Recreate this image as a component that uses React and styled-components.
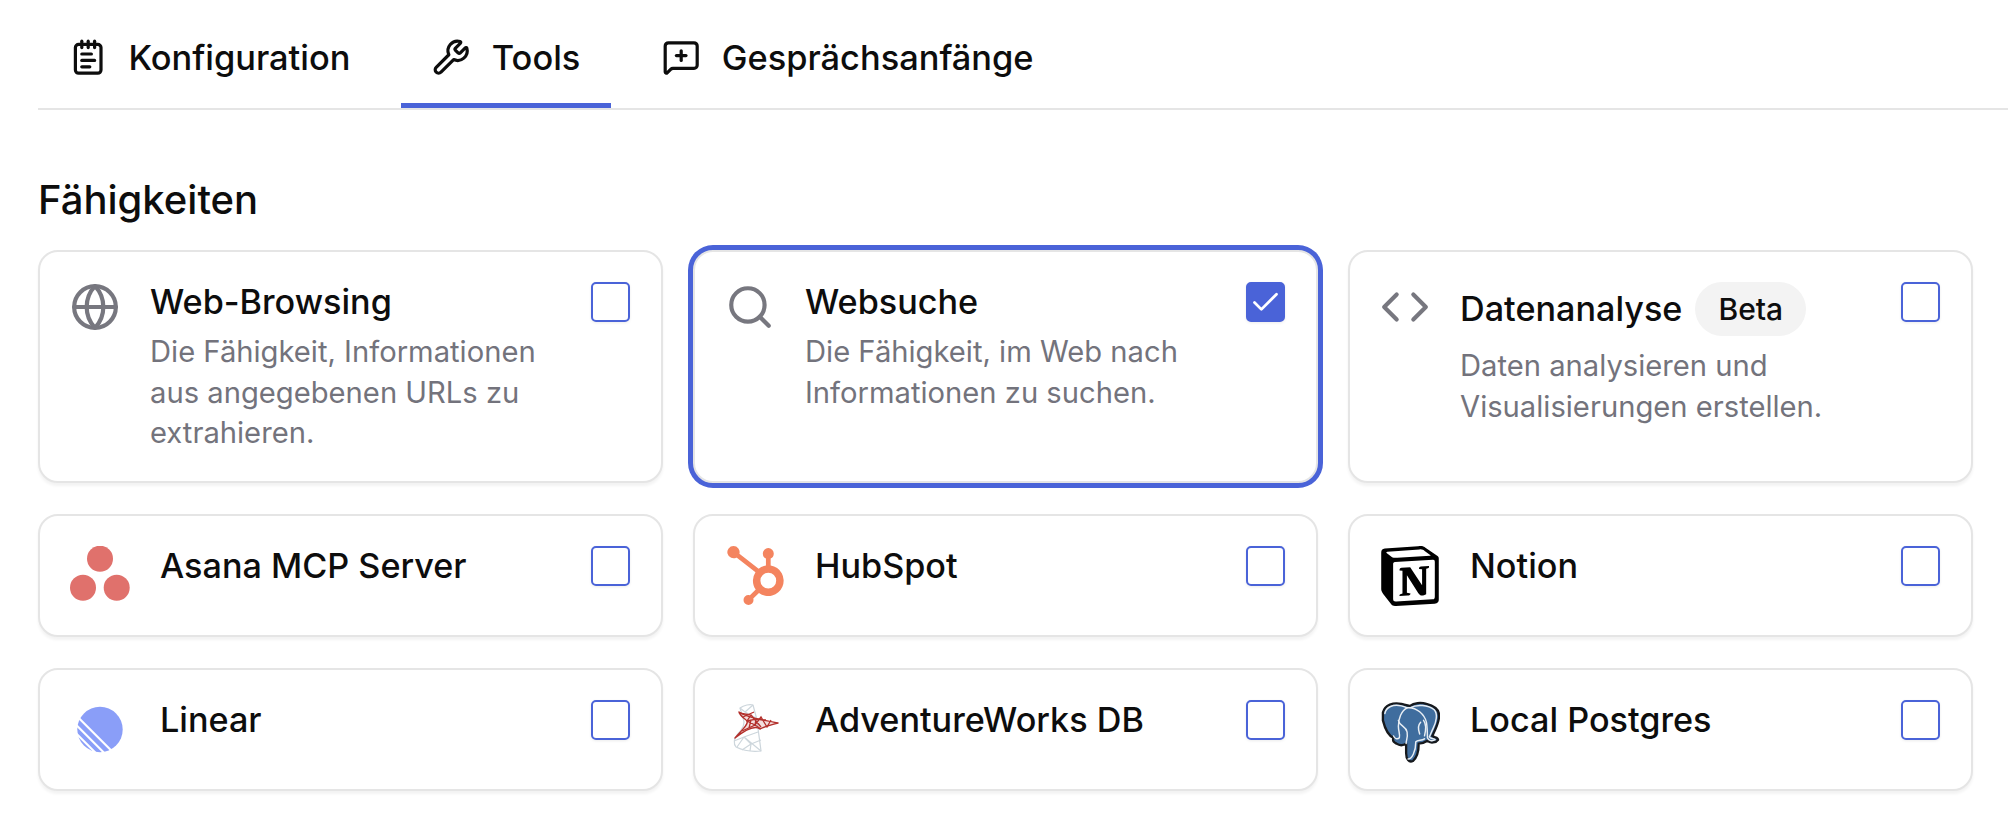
import React from "react";
import styled, { createGlobalStyle } from "styled-components";
import {
  Check,
  Code,
  Globe,
  MessageSquarePlus,
  NotepadText,
  Search,
  Wrench,
} from "lucide-react";
import { SiHubspot, SiNotion } from "react-icons/si";

const BLUE = "#4a63d8";

const GlobalStyle = createGlobalStyle`
  html, body {
    margin: 0;
    background: #fff;
  }
  body {
    font-family: "Inter", "Liberation Sans", sans-serif;
    color: #0d0d0d;
  }
`;

const AsanaLogo = () => (
  <svg width="60" height="60" viewBox="0 0 60 60">
    <g fill="#e0716c">
      <circle cx="30" cy="12.7" r="13" />
      <circle cx="13" cy="41.7" r="13" />
      <circle cx="46.7" cy="41.7" r="13" />
    </g>
  </svg>
);

const LinearLogo = () => (
  <svg width="60" height="60" viewBox="0 0 60 60">
    <circle cx="30" cy="29.5" r="22.7" fill="#8a9ef8" />
    <g stroke="#fff" strokeWidth="2.2">
      <path d="M5 14.2 44 53.2" />
      <path d="M3 21.7 36 54.7" />
      <path d="M3 30.3 28 55.3" />
    </g>
  </svg>
);

const SqlServerLogo = () => (
  <svg width="60" height="60" viewBox="0 0 60 60">
    <g fill="none" stroke="#cdd6dc" strokeWidth="1.2" strokeLinejoin="round">
      <path d="M15 8 C19 5 25 4 28 5 L32 20 C33 30 35 42 36 51 C27 52 17 50 11 47 C8 43 9 39 12 35 C17 30 21 24 18 18 Z" />
      <path d="M28 5 L20 12 L15 8 M20 12 L31 18 M12 47 L19 37 L36 51 M19 37 L33 32 M19 37 L9 41 M19 37 L26 44 L36 40 M26 44 L25 51 M26 44 L17 50" />
    </g>
    <path
      d="M14 12 C24 19 40 20 53 23 C46 25 40 26 35 29 C30 25 20 30 10 38 C16 31 24 24 22 21 C19 18 15 16 14 12 Z"
      fill="#b3302c"
      fillOpacity="0.16"
      stroke="#b3302c"
      strokeWidth="1.4"
      strokeLinejoin="round"
    />
    <path
      d="M14 13 L26 15 L22 21 L30 25 L36 17 L42 27 L46 20 M26 15 L36 27 M22 21 L31 19 L30 25 L17 31 M30 25 L36 29 M18 17 L29 12 M31 19 L41 20 M24 28 L26 20"
      fill="none"
      stroke="#b3302c"
      strokeWidth="1.3"
    />
  </svg>
);

const PostgresLogo = () => (
  <svg width="62" height="64" viewBox="4 1 62 66">
    <path
      d="M7 14 C9 6 18 3 26 5 C30 6 33 7 35 7 C39 4 46 3 52 5 C60 7 66 11 65 19 C64 27 60 34 58 38 C60 40 64 39 64 42 C62 45 56 46 53 43 C50 45 46 46 44 46 C44 52 43 60 38 64 C34 66 31 62 31 56 L31 46 C28 48 24 48 21 46 C17 44 17 42 18 40 C13 38 9 30 7 22 Z"
      fill="#3f6d9e"
      stroke="#16191d"
      strokeWidth="2.4"
      strokeLinejoin="round"
    />
    <g fill="none" stroke="#e8eef4" strokeWidth="1.5" strokeLinecap="round">
      <path d="M9 15 C10 8 18 5 26 7 C30 8 32 9 32 9 C26 12 23 20 23 28 C23 33 25 37 24 40 C22 42 19 41 18 38" />
      <path d="M35 9 C42 5 54 6 60 11 C64 15 62 24 59 30 C57 34 56 37 55 39 C55 41 61 41 61 42 C58 44 54 43 53 40 C53 36 53 30 52 24 C50 16 42 8 32 9" />
      <path d="M31 46 C31 42 33 40 32 34 C31 28 24 28 23 22" />
      <path d="M33 62 C37 62 41 54 41 44 C43 42 47 43 50 41" />
      <path d="M46 24 C42 28 44 33 45 36 M49 22 C52 26 51 34 50 38" />
    </g>
  </svg>
);

const tabs = [
  { label: "Konfiguration", icon: NotepadText },
  { label: "Tools", icon: Wrench, active: true },
  { label: "Gesprächsanfänge", icon: MessageSquarePlus },
];

const capabilities = [
  {
    title: "Web-Browsing",
    text: "Die Fähigkeit, Informationen aus angegebenen URLs zu extrahieren.",
    icon: Globe,
  },
  {
    title: "Websuche",
    text: "Die Fähigkeit, im Web nach Informationen zu suchen.",
    icon: Search,
    checked: true,
  },
  {
    title: "Datenanalyse",
    text: "Daten analysieren und Visualisierungen erstellen.",
    icon: Code,
    badge: "Beta",
  },
];

const servers = [
  { title: "Asana MCP Server", logo: <AsanaLogo /> },
  { title: "HubSpot", logo: <SiHubspot size={59} color="#f4845f" /> },
  { title: "Notion", logo: <SiNotion size={60} color="#000" /> },
  { title: "Linear", logo: <LinearLogo /> },
  { title: "AdventureWorks DB", logo: <SqlServerLogo /> },
  { title: "Local Postgres", logo: <PostgresLogo /> },
];

const Box = ({ checked }) => (
  <CheckBox $checked={checked}>
    {checked && <Check size={33} color="#fff" strokeWidth={2} />}
  </CheckBox>
);

export default function App() {
  return (
    <Page>
      <GlobalStyle />
      <TabBar>
        {tabs.map(({ label, icon: Icon, active }) => (
          <Tab key={label} $active={active}>
            <Icon size={38.4} strokeWidth={2} />
            <TabLabel>{label}</TabLabel>
          </Tab>
        ))}
      </TabBar>
      <Section>
        <Heading>Fähigkeiten</Heading>
        <Grid>
          {capabilities.map(({ title, text, icon: Icon, checked, badge }) => (
            <Card key={title} $selected={checked}>
              <SkillIcon>
                <Icon size={50} strokeWidth={2} />
              </SkillIcon>
              <CardBody>
                <TitleRow>
                  <Title>{title}</Title>
                  {badge && <Badge>{badge}</Badge>}
                </TitleRow>
                <Description>{text}</Description>
              </CardBody>
              <Box checked={checked} />
            </Card>
          ))}
          {servers.map(({ title, logo }) => (
            <Card key={title}>
              <Logo>{logo}</Logo>
              <CardBody>
                <Title>{title}</Title>
              </CardBody>
              <Box />
            </Card>
          ))}
        </Grid>
      </Section>
    </Page>
  );
}

const Page = styled.div`
  width: 2008px;
  height: 830px;
  overflow: hidden;
  background: #fff;
`;

const TabBar = styled.div`
  display: flex;
  gap: 20px;
  margin-left: 38px;
  border-bottom: 2px solid #e5e5e5;
`;

const Tab = styled.div`
  display: flex;
  align-items: flex-start;
  gap: 21px;
  box-sizing: border-box;
  height: 108px;
  padding: 38px 31px 0;
  border-bottom: 5px solid ${(p) => (p.$active ? BLUE : "transparent")};
  color: #0d0d0d;
`;

const TabLabel = styled.span`
  font-size: 34.4px;
  font-weight: 450;
  line-height: 40px;
`;

const Section = styled.div`
  width: 1935px;
  margin-left: 38px;
`;

const Heading = styled.h2`
  margin: 70px 0 30px;
  font-size: 40px;
  font-weight: 450;
  line-height: 40px;
`;

const Grid = styled.div`
  display: grid;
  grid-template-columns: repeat(3, 1fr);
  column-gap: 30px;
  row-gap: 31px;
`;

const Card = styled.div`
  display: flex;
  align-items: flex-start;
  box-sizing: border-box;
  min-height: 123px;
  padding: 30px 31px 27px 30px;
  border: 2px solid #e5e5e5;
  border-radius: 20px;
  background: #fff;
  box-shadow: ${(p) =>
    p.$selected ? `0 0 0 5px ${BLUE}` : "0 3px 3px rgba(0, 0, 0, 0.05)"};
`;

const SkillIcon = styled.div`
  display: flex;
  flex: none;
  width: 50px;
  margin-right: 30px;
  color: #77777f;
`;

const Logo = styled.div`
  display: flex;
  flex: none;
  justify-content: center;
  width: 60px;
  height: 60px;
  margin-right: 30px;
`;

const CardBody = styled.div`
  flex: 1;
  min-width: 0;
  padding-right: 40px;
`;

const TitleRow = styled.div`
  display: flex;
  align-items: center;
  gap: 13px;
`;

const Title = styled.div`
  font-size: 34.2px;
  font-weight: 450;
  line-height: 40px;
  white-space: nowrap;
`;

const Badge = styled.span`
  padding: 0 23px;
  border-radius: 27px;
  background: #f3f3f3;
  font-size: 30px;
  font-weight: 450;
  line-height: 54px;
`;

const Description = styled.p`
  margin: 10px 0 0;
  font-size: 29.2px;
  line-height: 40.5px;
  color: #73737c;
`;

const CheckBox = styled.div`
  display: flex;
  flex: none;
  align-items: center;
  justify-content: center;
  box-sizing: border-box;
  width: 39px;
  height: 40px;
  border: 2px solid ${BLUE};
  border-radius: 5px;
  background: ${(p) => (p.$checked ? BLUE : "#fff")};
  box-shadow: 0 1px 3px rgba(0, 0, 0, 0.08);
`;
